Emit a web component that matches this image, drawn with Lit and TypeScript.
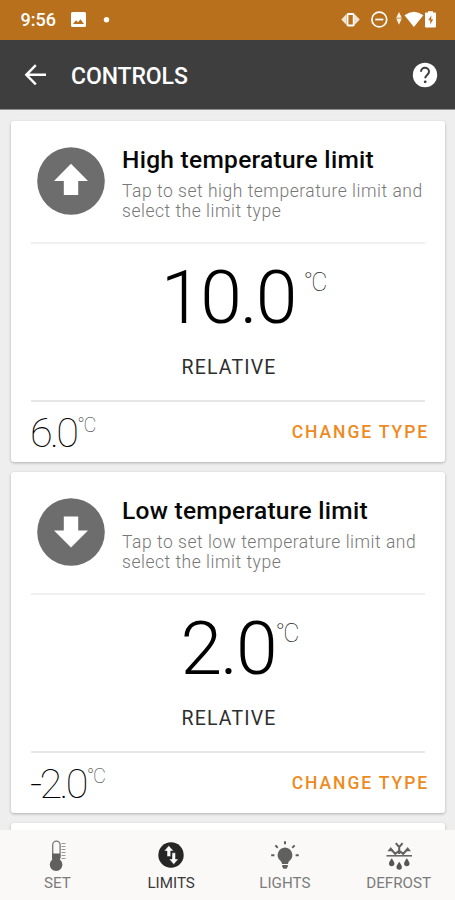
import { LitElement, html, css, svg } from "lit";
import { customElement, property } from "lit/decorators.js";

const arrow = svg`<path d="M34 16.8 51 34H41.2V48H26.8V34H17Z" fill="#fff"/>`;

@customElement("limit-card")
class LimitCard extends LitElement {
  @property() kind = "high";
  @property() value = "";
  @property() current = "";

  static styles = css`
    :host { display: block; height: 341px; background: #fff; border-radius: 3px; box-shadow: 0 1px 3px rgba(0,0,0,.27); box-sizing: border-box; padding: 0 20px; flex: none; }
    .head { height: 121px; display: flex; border-bottom: 2px solid #f0f0f0; box-sizing: content-box; }
    .disc { width: 68px; height: 68px; margin: 26px 17px 0 6px; flex: none; }
    .low .arrow { transform: rotate(180deg); transform-origin: 34px 33.2px; }
    .words { padding-top: 25px; white-space: nowrap; }
    .title { font-size: 24.5px; line-height: 28px; font-weight: 460; color: #080808; letter-spacing: .28px; }
    .desc { font-size: 17.5px; line-height: 20.4px; font-weight: 300; color: #777; letter-spacing: .52px; margin-top: 7px; }
    .main { height: 156px; display: flex; flex-direction: column; align-items: center; border-bottom: 2px solid #e6e6e6; }
    .reading { position: relative; margin-top: 14px; font-size: 75px; line-height: 78px; font-weight: 300; color: #000; letter-spacing: -2px; }
    .unit { position: absolute; left: 100%; top: 0; font-size: 25px; line-height: 50px; font-weight: 100; letter-spacing: -1.8px; color: #222; white-space: nowrap; }
    .high .reading .unit { margin-left: 8px; }
    .low .reading .unit { margin-left: 0; }
    .type { font-size: 19.5px; line-height: 24px; margin-top: 20px; letter-spacing: 1.15px; color: #2e2e2e; padding-left: 2px; }
    .foot { height: 60px; display: flex; justify-content: space-between; align-items: center; margin-right: -3px; }
    .now { position: relative; font-size: 41.5px; line-height: 60px; padding-top: 2px; margin-left: -1px; font-weight: 150; letter-spacing: -2.7px; color: #000; }
    .now .unit { font-size: 20px; line-height: 48px; margin-left: 1px; letter-spacing: -1.5px; color: #333; }
    .change { font-size: 17.5px; font-weight: 500; letter-spacing: 1.9px; color: #ed8b22; margin-right: -1px; }
  `;

  render() {
    const high = this.kind === "high";
    return html`
      <div class=${this.kind}>
        <div class="head">
          <svg class="disc" viewBox="0 0 68 68"><circle cx="34" cy="34" r="33.8" fill="#6d6d6d"/><g class="arrow">${arrow}</g></svg>
          <div class="words">
            <div class="title">${high ? "High" : "Low"} temperature limit</div>
            <div class="desc">Tap to set ${this.kind} temperature limit and<br />select the limit type</div>
          </div>
        </div>
        <div class="main">
          <div class="reading">${this.value}<span class="unit">°C</span></div>
          <div class="type">RELATIVE</div>
        </div>
        <div class="foot">
          <div class="now">${this.current}<span class="unit">°C</span></div>
          <div class="change">CHANGE TYPE</div>
        </div>
      </div>`;
  }
}

const thermometer = svg`
  <path d="M11.7 20V6.8a3.7 3.7 0 0 1 7.4 0V20" fill="none" stroke="#777" stroke-width="1.3"/>
  <path d="M11.4 15.5h8v6.3a6.3 6.3 0 1 1-8 0Z" fill="#606060" transform="translate(-.3)"/>
  <path d="M20.5 5.5h4M20.5 8.5h4M20.5 11.5h4M20.5 14.5h4M20.5 17.5h4M20.5 20.5h4" stroke="#999" stroke-width="1"/>`;
const limits = svg`
  <circle cx="16" cy="17" r="12.7" fill="#262626"/>
  <path d="M13.8 7.6 18.6 13H15.7V18.6H12V13H9Z M18.8 26.5 14 21H17V14.8H20.5V21H23.4Z" fill="#fff" stroke="#262626" stroke-width=".5"/>`;
const bulb = svg`
  <path d="M16 9.4a7.6 7.6 0 0 0-4.6 13.4c1.1 1 1.4 2 1.6 3.2h6c.2-1.2.5-2.2 1.6-3.2A7.6 7.6 0 0 0 16 9.4Z M13.2 27h5.6v1.7l-1.3 2h-3l-1.3-2Z" fill="#606060"/>
  <path d="M16 3.2v3M6.3 7.4l2.5 2.4M25.7 7.4l-2.5 2.4M2.2 17.2h3.2M26.6 17.2h3.2" stroke="#606060" stroke-width="2"/>`;
const defrost = svg`
  <path d="M3.5 17.8h25.5" stroke="#606060" stroke-width="1.5"/>
  <path d="M4.4 13.3 7.8 9l3 4.3ZM28 13.3 24.6 9l-3 4.3Z" fill="#606060"/>
  <path d="M8.3 11.5 12.2 15.9l4-3.2 4 3.2 3.9-4.4M16.2 16V8.5M12.8 5.2l3.4 4 3.4-4" fill="none" stroke="#606060" stroke-width="2"/>
  <path d="M8.7 20.2c1.8 2.8 2.7 4 2.7 5.3a2.7 2.7 0 0 1-5.4 0c0-1.3.9-2.5 2.7-5.3ZM16.2 23.7c1.8 2.8 2.7 4 2.7 5.3a2.7 2.7 0 0 1-5.4 0c0-1.3.9-2.5 2.7-5.3ZM23.8 20.2c1.8 2.8 2.7 4 2.7 5.3a2.7 2.7 0 0 1-5.4 0c0-1.3.9-2.5 2.7-5.3Z" fill="#555"/>`;

@customElement("app-root")
class AppRoot extends LitElement {
  static styles = css`
    :host { display: flex; flex-direction: column; height: 900px; width: 455px; overflow: hidden; background: #eee; font-family: Roboto, sans-serif; }
    .status { height: 40px; flex: none; background: #b8701d; display: flex; align-items: center; color: #fff; }
    .time { font-size: 18px; font-weight: 500; line-height: 40px; width: 50px; padding-left: 20.5px; }
    .status svg { display: block; flex: none; }
    .right { margin-left: auto; }
    .bar { height: 70px; flex: none; background: #3e3e3e; display: flex; align-items: center; color: #fff; border-bottom: 1px solid #8f8f8f; box-sizing: border-box; }
    .back { width: 24px; height: 24px; margin-left: 24px; }
    .heading { font-size: 23px; font-weight: 500; margin-left: 23px; letter-spacing: -.1px; line-height: 66px; padding-top: 4px; }
    .help { width: 26px; height: 26px; margin: 1px 17px 0 auto; }
    .list { flex: 1; min-height: 0; overflow: hidden; display: flex; flex-direction: column; gap: 10px; padding: 11px 10px 0 11px; }
    .next { flex: none; height: 40px; background: #fff; border-radius: 3px; box-shadow: 0 1px 3px rgba(0,0,0,.27); }
    nav { height: 70px; flex: none; background: #faf9f7; display: grid; grid-template-columns: repeat(4, 1fr); }
    .tab { display: flex; flex-direction: column; align-items: center; color: #7c7c7c; font-size: 15.2px; line-height: 20px; padding-top: 8px; padding-left: 1px; }
    .tab svg { width: 32px; height: 34px; display: block; margin-bottom: 1px; }
    .tab.on { color: #3a3a3a; }
  `;

  render() {
    const tabs = [["SET", thermometer], ["LIMITS", limits], ["LIGHTS", bulb], ["DEFROST", defrost]] as const;
    return html`
      <div class="status">
        <div class="time">9:56</div>
        <svg width="44" height="40" viewBox="71 0 44 40">
          <path d="M72.5 12h12q1.5 0 1.5 1.5v12q0 1.5-1.5 1.5h-12q-1.5 0-1.5-1.5v-12q0-1.5 1.5-1.5ZM73 24h11l-3.5-4.7-2.5 3-2-2Z" fill="#fff" fill-rule="evenodd"/>
          <circle cx="106.5" cy="19.7" r="2.7" fill="#fff"/>
        </svg>
        <svg class="right" width="115" height="40" viewBox="340 0 115 40" fill="#fff">
          <path d="M341.3 19.6 346 14.6v10ZM359.8 19.6 355 14.6v10Z" opacity=".8"/><rect x="347.4" y="13.9" width="6.4" height="11.6" rx="1" fill="none" stroke="#fff" stroke-width="2"/>
          <circle cx="379.3" cy="19.5" r="7.4" fill="none" stroke="#fff" stroke-width="1.7"/><path d="M375.3 18.6h8v1.8h-8Z"/>
          <path d="M396.2 17.8 399 12l2.8 5.8ZM396.2 18.6l2.8 6.2 2.8-6.2Z" opacity=".9"/>
          <path d="M404.5 15.2q9.4-7 18.8 0L413.9 27Z"/>
          <path d="M428 12.5v-1.2h5v1.2h2q1 0 1 1v13q0 1-1 1h-9q-1 0-1-1v-13q0-1 1-1ZM431.3 15.5l-3.1 4.8h2v4l3.1-4.8h-2Z" fill-rule="evenodd"/>
        </svg>
      </div>
      <div class="bar">
        <svg class="back" viewBox="0 0 24 24"><path d="M22 11.8H3M11.8 2.2 2.3 11.8l9.5 9.5" fill="none" stroke="#fff" stroke-width="2.4"/></svg>
        <div class="heading">CONTROLS</div>
        <svg class="help" viewBox="0 0 26 26"><circle cx="13" cy="13" r="12.2" fill="#fff"/><path d="M9 9.8a4 4 0 0 1 8 0c0 3-3.8 3.3-3.8 6.4" fill="none" stroke="#3e3e3e" stroke-width="2"/><circle cx="13.2" cy="19.8" r="1.4" fill="#3e3e3e"/></svg>
      </div>
      <div class="list">
        <limit-card kind="high" value="10.0" current="6.0"></limit-card>
        <limit-card kind="low" value="2.0" current="-2.0"></limit-card>
        <div class="next"></div>
      </div>
      <nav>
        ${tabs.map(([label, icon], i) => html`<div class="tab ${i === 1 ? "on" : ""}"><svg viewBox="0 0 32 34">${icon}</svg>${label}</div>`)}
      </nav>`;
  }
}
